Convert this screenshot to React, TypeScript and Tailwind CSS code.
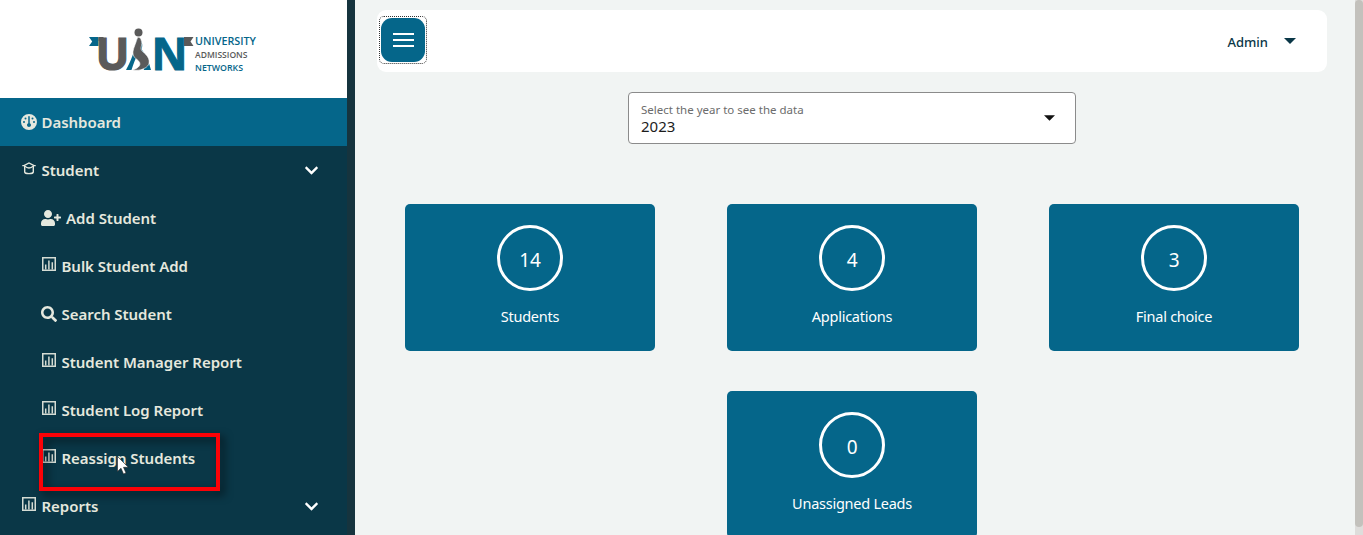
import type { ReactNode } from "react";
import { FaChevronDown, FaSearch, FaUserPlus } from "react-icons/fa";
import { FaGauge } from "react-icons/fa6";

function Logo() {
  return (
    <svg viewBox="-89 -28 347 98" className="h-[98px] w-[347px]" fontFamily="'Open Sans', sans-serif">
      <path d="M0 9H9.500V18H0L3.200 13.500Z" fill="#05668a" />
      <rect x="9.500" y="9" width="5" height="4" fill="#5a5a5a" />
      <text x="6.500" y="41.500" fontSize="45" fontWeight="700" fill="#5a5a5a" stroke="#5a5a5a" strokeWidth="1.200" textLength="34" lengthAdjust="spacingAndGlyphs">U</text>
      <text x="62.500" y="41.700" fontSize="45" fontWeight="700" fill="#05668a" stroke="#05668a" strokeWidth="1" textLength="36" lengthAdjust="spacingAndGlyphs">N</text>
      <path d="M95 9H104.500L101.500 13.500L104.500 18H95Z" fill="#5a5a5a" />
      <circle cx="49.500" cy="4.500" r="4" fill="#5a5a5a" />
      <path d="M47.500 11C46.500 22 41 35 37 42H42.500C44.500 36 46.500 30 49 26Z" fill="#05668a" />
      <path d="M50.500 10C55.500 17 52 20 53 22C57 27 60 34 62 42H55L49 24Z" fill="#05668a" />
      <path d="M48.500 9.500C50 9 51.500 10 52 11.500C54.500 18 49.500 20 54 24C61 29 63 37 55 40.500C51 42.800 47 42.300 43.500 42C50 40 54 36 48 31.500C40 26 46 19 48.500 9.500Z" fill="#5a5a5a" stroke="#fff" strokeWidth=".6" />
      <text x="106" y="17.300" fontSize="10.700" fontWeight="600" fill="#05668a" textLength="61" lengthAdjust="spacingAndGlyphs">UNIVERSITY</text>
      <text x="106" y="29.500" fontSize="8.800" fontWeight="600" fill="#5a5a5a" textLength="52.500" lengthAdjust="spacingAndGlyphs">ADMISSIONS</text>
      <text x="106" y="42.700" fontSize="9.300" fontWeight="600" fill="#05668a" textLength="48" lengthAdjust="spacingAndGlyphs">NETWORKS</text>
    </svg>
  );
}

function ReportIcon() {
  return (
    <svg viewBox="0 0 14 14" className="mr-[5.500px] mb-[5px] ml-px size-[14px] text-[#d5dcd4]" fill="none" stroke="currentColor">
      <path d="M.75 .75H13.250V13.250H.75Z" strokeWidth="1.500" />
      <path d="M3.700 7.500V12.500M6.900 3.500V12.500M10.300 5.300V12.500" strokeWidth="1.500" />
    </svg>
  );
}

function CapIcon() {
  return (
    <svg viewBox="0 0 14 13" className="mr-[5.500px] mb-1 ml-px h-[13px] w-[14px]" fill="none" stroke="currentColor" strokeWidth="1.400">
      <path d="M.3 3.600H2L7 1L12 3.600H13.700M2.500 3.600Q7 8.500 11.500 3.600" />
      <path d="M2.700 3.600V10Q3 11.600 7 11.600Q11 11.600 11.300 10V3.600" />
    </svg>
  );
}

function NavItem({ icon, children, className = "pl-[21px]", open = false }: { icon: ReactNode; children: ReactNode; className?: string; open?: boolean }) {
  return (
    <div className={`flex h-12 shrink-0 items-center pr-[28px] text-[15px] font-semibold text-[#e5e8de] ${className}`}>
      {icon}
      <span className="tracking-[-0.03px]">{children}</span>
      {open && <FaChevronDown className="ml-auto size-[15px] text-white" />}
    </div>
  );
}

function Card({ value, label }: { value: number; label: string }) {
  return (
    <div className="flex h-[147px] w-[250px] flex-col items-center rounded-[5px] bg-[#05668a] pt-[21px] text-white">
      <div className="flex size-[66px] items-center justify-center rounded-full border-[3px] border-white pt-[4px] text-[19px] leading-7 tracking-[-0.2px]">{value}</div>
      <div className="mt-[13px] text-[14.500px] leading-6 tracking-[-0.25px]">{label}</div>
    </div>
  );
}

const sub = "pl-[41px]";

export default function App() {
  return (
    <div className="relative flex h-[535px] w-[1363px] overflow-hidden bg-[#f1f4f3] font-['Noto_Sans',sans-serif]">
      <aside className="flex w-[347px] shrink-0 flex-col overflow-hidden bg-[#0a3747]">
        <div className="flex h-[98px] shrink-0 bg-white">
          <Logo />
        </div>
        <NavItem className="bg-[#05668a] pl-[21px]" icon={<FaGauge className="mr-[4.500px] size-4" />}>Dashboard</NavItem>
        <NavItem open icon={<CapIcon />}>Student</NavItem>
        <NavItem className={sub} icon={<FaUserPlus className="mr-[5px] h-4 w-5" />}>Add Student</NavItem>
        <NavItem className={sub} icon={<ReportIcon />}>Bulk Student Add</NavItem>
        <NavItem className={sub} icon={<FaSearch className="mr-[4.500px] size-4" />}>Search Student</NavItem>
        <NavItem className={sub} icon={<ReportIcon />}>Student Manager Report</NavItem>
        <NavItem className={sub} icon={<ReportIcon />}>Student Log Report</NavItem>
        <NavItem className={sub} icon={<ReportIcon />}>Reassign Students</NavItem>
        <NavItem open icon={<ReportIcon />}>Reports</NavItem>
      </aside>
      <div className="w-2 shrink-0 bg-[#16343e]" />

      <main className="flex w-[1000px] shrink-0 flex-col pt-[10px] pl-[22px]">
        <header className="flex h-[62px] w-[950px] shrink-0 items-start justify-between rounded-[9px] bg-white pl-1">
          <div className="mt-1.5 -ml-0.5 rounded-[5px] border border-dotted border-[#333] p-px">
            <button aria-label="Menu" className="flex size-11 flex-col items-center justify-center gap-1 rounded-[11px] bg-[#05668a]">
              <span className="h-0.5 w-[21px] bg-white" />
              <span className="h-0.5 w-[21px] bg-white" />
              <span className="h-0.5 w-[21px] bg-white" />
            </button>
          </div>
          <div className="flex h-full items-center pt-[2px] pr-[31px] text-[13px] font-medium text-[#0a3747]">
            <span className="pt-0.5">Admin</span>
            <svg viewBox="0 0 12 6" className="mb-[3px] ml-4 h-1.5 w-3" fill="currentColor"><path d="M0 0H12L6 6Z" /></svg>
          </div>
        </header>

        <div className="mt-5 ml-[251px] flex h-[52px] w-[448px] shrink-0 items-center justify-between rounded-[4px] border border-[#8b8b8b] bg-white pr-[20px] pl-3">
          <div className="flex flex-col pt-px">
            <span className="text-[11.500px] leading-4 text-[#6c6c6c]">Select the year to see the data</span>
            <span className="text-[15px] leading-[17px] text-[#1c1c1c]">2023</span>
          </div>
          <svg viewBox="0 0 12 6" className="h-1.5 w-[11px]" fill="#111"><path d="M0 0H12L6 6Z" /></svg>
        </div>

        <section className="mt-[60px] ml-7 flex w-[894px] flex-wrap justify-center gap-x-[72px] gap-y-10">
          <Card value={14} label="Students" />
          <Card value={4} label="Applications" />
          <Card value={3} label="Final choice" />
          <Card value={0} label="Unassigned Leads" />
        </section>
      </main>
      <div className="h-full w-2 shrink-0 bg-[#dedddb]">
        <div className="h-[527px] rounded-full bg-[#c3c1bc]" />
      </div>

      <div className="absolute top-[433px] left-[39px] h-[58px] w-[181px] border-4 border-[#fb0207] drop-shadow-[4px_4px_4px_rgba(0,0,0,0.6)]" />
      <svg viewBox="0 0 12 19" className="absolute top-[456px] left-[117px] h-[19px] w-3"><path d="M.5 .5V15.500L4 12.200L6.500 18L9 17L6.500 11.300H11.300Z" fill="#fff" stroke="#222" strokeWidth=".6" /></svg>
    </div>
  );
}
